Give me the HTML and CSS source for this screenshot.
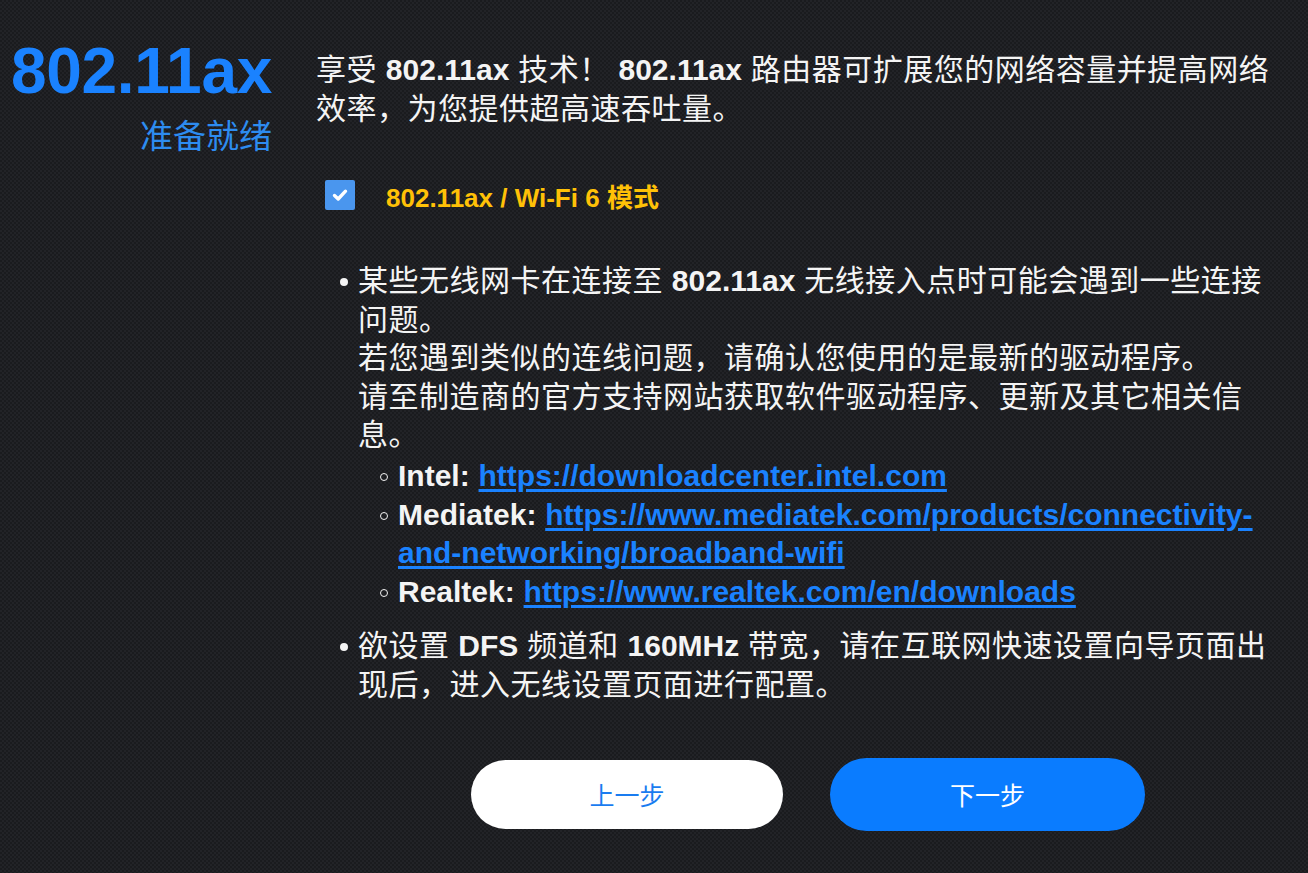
FILE: index.html
```html
<!DOCTYPE html>
<html lang="zh-CN">
<head>
<meta charset="utf-8">
<title>802.11ax</title>
<link rel="stylesheet" href="styles.css">
</head>
<body>
<div class="page">
  <div class="side">
    <div class="side-title">802.11ax</div>
    <div class="side-sub">准备就绪</div>
  </div>
  <div class="main">
    <p class="intro">享受 <b>802.11ax</b> 技术！ <b>802.11ax</b> 路由器可扩展您的网络容量并提高网络效率，为您提供超高速吞吐量。</p>
    <label class="check-row">
      <span class="checkbox">
        <svg viewBox="0 0 30 30" width="30" height="30"><path d="M9.5 15.5 L13.2 19 L20.5 11.2" fill="none" stroke="#fff" stroke-width="3.4" stroke-linecap="round" stroke-linejoin="round"/></svg>
      </span>
      <span class="check-label">802.11ax / Wi-Fi 6 模式</span>
    </label>
    <ul class="notes">
      <li>某些无线网卡在连接至 <b>802.11ax</b> 无线接入点时可能会遇到一些连接问题。<br>若您遇到类似的连线问题，请确认您使用的是最新的驱动程序。<br>请至制造商的官方支持网站获取软件驱动程序、更新及其它相关信息。
        <ul class="vendors">
          <li><b>Intel:</b> <a href="#">https://downloadcenter.intel.com</a></li>
          <li><b>Mediatek:</b> <a href="#">https://www.mediatek.com/products/connectivity-and-networking/broadband-wifi</a></li>
          <li><b>Realtek:</b> <a href="#">https://www.realtek.com/en/downloads</a></li>
        </ul>
      </li>
      <li>欲设置 <b>DFS</b> 频道和 <b>160MHz</b> 带宽，请在互联网快速设置向导页面出现后，进入无线设置页面进行配置。</li>
    </ul>
    <div class="actions">
      <button class="btn btn-prev">上一步</button>
      <button class="btn btn-next">下一步</button>
    </div>
  </div>
</div>
</body>
</html>
```

FILE: styles.css
```css
html, body {
  margin: 0;
  padding: 0;
}
body {
  width: 1308px;
  height: 873px;
  overflow: hidden;
  background-color: #1d1e21;
  background-image: repeating-conic-gradient(#222327 0 25%, #1a1b1e 0 50%);
  background-size: 4px 4px;
  font-family: "Liberation Sans", "Noto Sans CJK SC", Arial, sans-serif;
  color: #f4f4f4;
}
.page {
  display: flex;
  gap: 44px;
  padding-top: 36px;
}
.side {
  width: 272px;
  flex: none;
  text-align: right;
}
.side-title {
  font-family: "Liberation Sans", Arial, sans-serif;
  font-weight: bold;
  font-size: 64px;
  line-height: 70px;
  color: #1a82ff;
  letter-spacing: -0.3px;
}
.side-sub {
  font-family: "Noto Sans CJK SC", "Liberation Sans", sans-serif;
  font-size: 33px;
  line-height: 40px;
  color: #2d8cf0;
  margin-top: 8px;
}
.main {
  width: 960px;
  flex: none;
}
.intro {
  margin: 14px 0 0 0;
  font-size: 30px;
  line-height: 39px;
  letter-spacing: 0.5px;
}
.intro b, .notes b, .notes a {
  font-weight: bold;
  letter-spacing: 0;
}
.check-row {
  display: flex;
  align-items: center;
  margin-top: 49px;
  padding-left: 9px;
  height: 36px;
}
.checkbox {
  width: 30px;
  height: 30px;
  border-radius: 2px;
  background: #4a96ee;
  display: flex;
  flex: none;
}
.check-label {
  margin-left: 31px;
  font-size: 26px;
  font-weight: bold;
  color: #ffc107;
}
.notes {
  margin: 49px 0 0 0;
  padding-left: 42px;
  font-size: 30px;
  line-height: 38.6px;
  letter-spacing: 0.5px;
  list-style: none;
}
.notes > li {
  position: relative;
}
.notes > li + li {
  margin-top: 16px;
}
.notes > li::before {
  content: "";
  position: absolute;
  left: -18px;
  top: 16px;
  width: 8px;
  height: 8px;
  border-radius: 50%;
  background: #f4f4f4;
}
.vendors {
  list-style: none;
  margin: 2px 0 0 0;
  padding-left: 40px;
}
.vendors > li {
  position: relative;
}
.vendors > li::before {
  content: "";
  position: absolute;
  left: -18px;
  top: 16px;
  width: 6px;
  height: 6px;
  border-radius: 50%;
  border: 1.5px solid #f4f4f4;
}
.vendors a {
  color: #1a82ff;
  text-decoration: underline;
  text-decoration-thickness: 3px;
  text-underline-offset: 3px;
}
.actions {
  display: flex;
  align-items: center;
  gap: 47px;
  margin-top: 53px;
  padding-left: 155px;
}
.btn {
  border: none;
  border-radius: 40px;
  font-family: "Noto Sans CJK SC", "Liberation Sans", sans-serif;
  font-size: 25px;
  cursor: pointer;
}
.btn-prev {
  width: 312px;
  height: 69px;
  background: #ffffff;
  color: #1a7cf0;
}
.btn-next {
  width: 315px;
  height: 73px;
  background: #0a7cff;
  color: #ffffff;
}
```
